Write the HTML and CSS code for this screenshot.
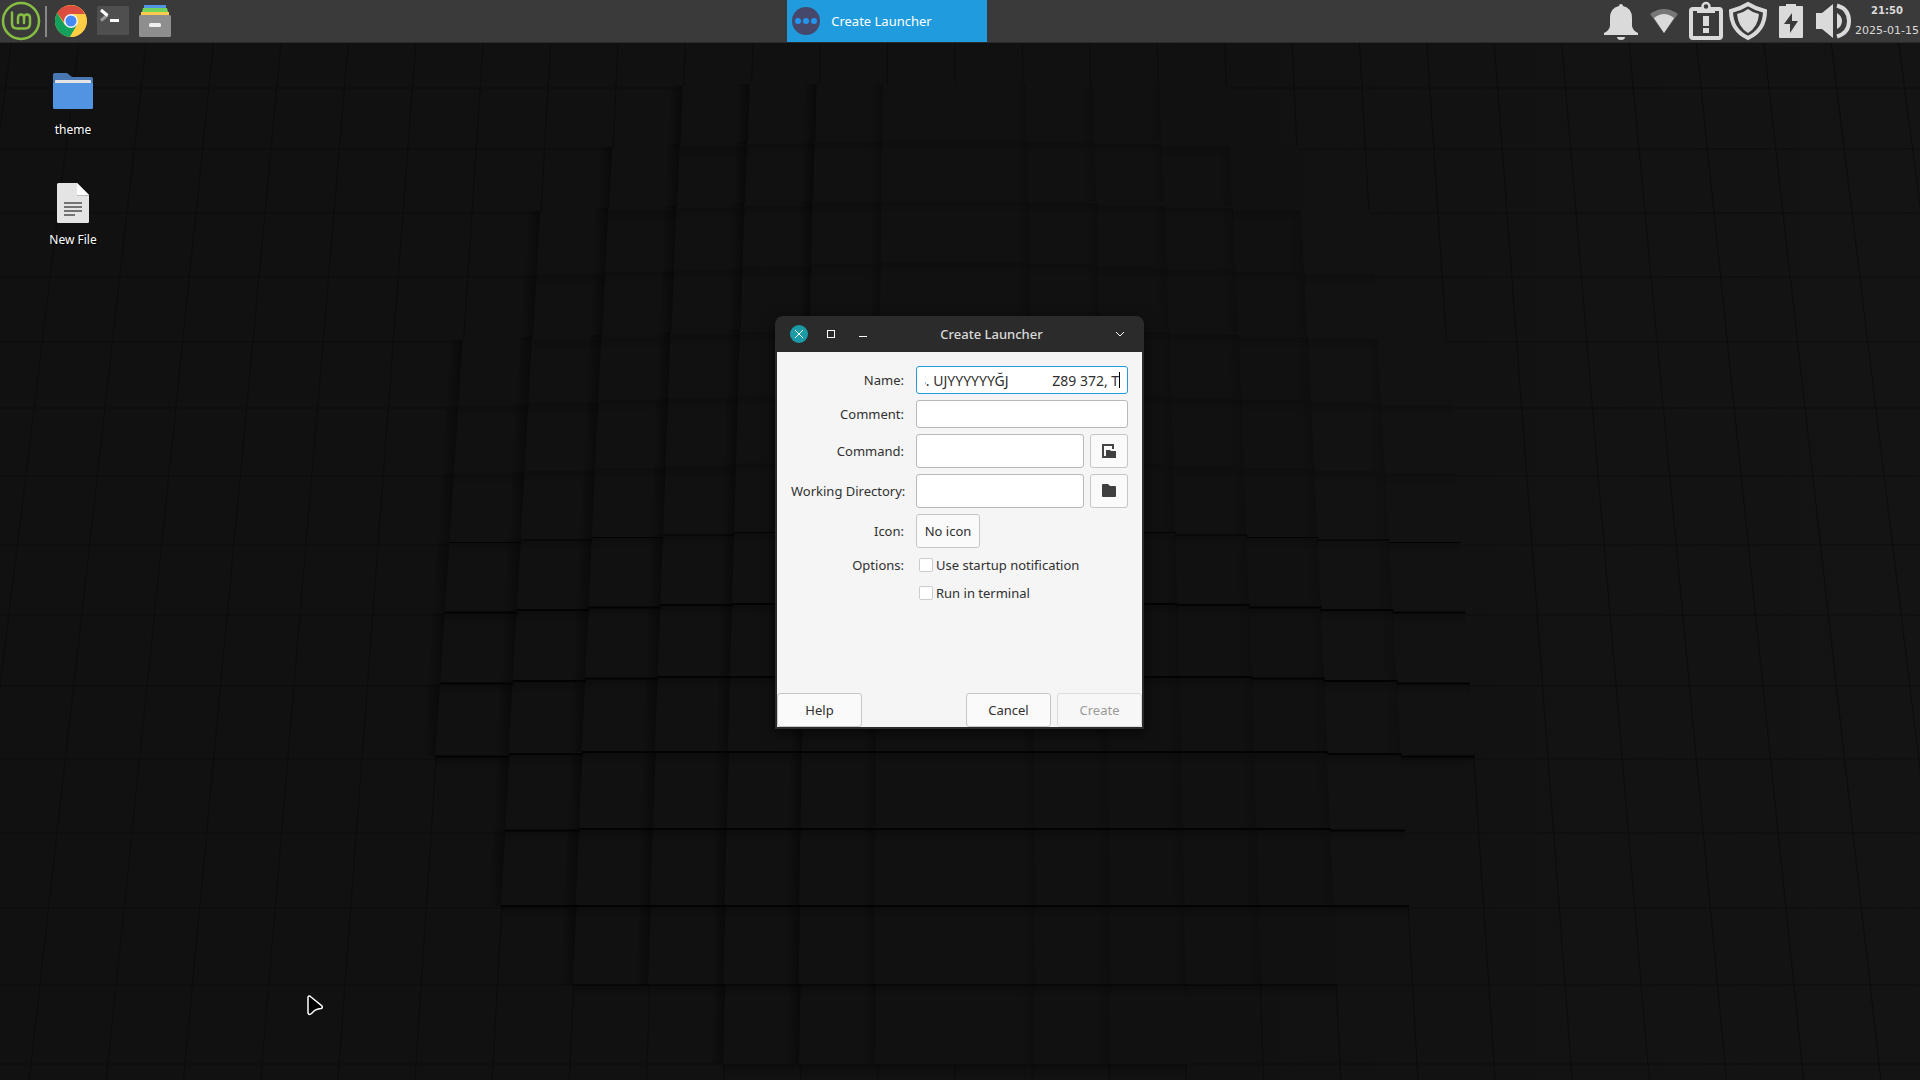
FILE: index.html
```html
<!DOCTYPE html>
<html lang="en">
<head>
<meta charset="utf-8">
<title>Desktop</title>
<link rel="stylesheet" href="styles.css">
</head>
<body>
<svg class="wallpaper" id="wallpaper" viewBox="0 0 1920 1080" preserveAspectRatio="xMidYMid slice" aria-hidden="true">
  <defs>
    <linearGradient id="base" x1="0" x2="1" y1="0" y2="0">
      <stop offset="0" stop-color="#111"/><stop offset="0.6" stop-color="#111"/><stop offset="1" stop-color="#141414"/>
    </linearGradient>
    <linearGradient id="side" x1="0" x2="1" y1="0" y2="0">
      <stop offset="0" stop-color="#050505" stop-opacity="0"/><stop offset="1" stop-color="#050505" stop-opacity="1"/>
    </linearGradient>
    <linearGradient id="under" x1="0" x2="0" y1="0" y2="1">
      <stop offset="0" stop-color="#050505" stop-opacity="1"/><stop offset="1" stop-color="#050505" stop-opacity="0"/>
    </linearGradient>
  </defs>
  <rect width="1920" height="1080" fill="url(#base)"/>
  <g id="grid"></g>
  <g id="blocks"></g>
  <g id="edges"></g>
</svg>

<header class="panel">
  <nav class="panel-left" aria-label="Launchers">
    <button class="menu-button" type="button" aria-label="Menu">
      <svg width="42" height="42" viewBox="0 0 42 42" fill="none" stroke="#86be43" stroke-linecap="round" stroke-linejoin="round">
        <circle cx="21" cy="21" r="18" stroke-width="2.500"/>
        <path d="M12 12.500V23.500Q12 28.500 17 28.500H25Q30 28.500 30 23.500V18Q30 14.500 27 14.500Q24 14.500 24 18V23M24 18Q24 14.500 21 14.500Q18 14.500 18 18V23" stroke-width="2.500"/>
      </svg>
    </button>
    <span class="separator"></span>
    <div class="launchers">
      <button type="button" aria-label="Chrome">
        <svg width="32" height="32" viewBox="0 0 32 32">
          <circle cx="16" cy="16" r="16" fill="#ffce44"/>
          <path d="M2.100 8A16 16 0 0 1 30 9H16L9 17Z" fill="#dc4d3f"/>
          <path d="M2.100 8A16 16 0 0 0 15 32L22 20L10 20Z" fill="#12a05c"/>
          <path d="M30 9A16 16 0 0 1 15 32L22.500 19L16 9Z" fill="#ffce44"/>
          <circle cx="16" cy="16" r="7" fill="#f3f3f3"/><circle cx="16" cy="16" r="5.500" fill="#4688f4"/>
        </svg>
      </button>
      <button type="button" aria-label="Terminal">
        <svg width="32" height="32" viewBox="0 0 32 32">
          <rect y="1" width="32" height="29" rx="1.500" fill="#4f4f4f"/>
          <path d="M4 15.500L10.500 10" stroke="#999" stroke-width="3"/>
          <path d="M4 5L10.500 10.500" stroke="#fff" stroke-width="3"/><path d="M13 15.500H22" stroke="#fff" stroke-width="3"/>
        </svg>
      </button>
      <button type="button" aria-label="Files">
        <svg width="32" height="32" viewBox="0 0 32 32">
          <path d="M5 0H27V4H5Z" fill="#5294e2"/><path d="M4 3H28L29 7H3Z" fill="#72d35a"/><path d="M2 7H30V11H2Z" fill="#ffcb4e"/>
          <rect y="10" width="32" height="22" rx="1.500" fill="#8e8e8e"/><rect x="10" y="18" width="12" height="4" rx="1.500" fill="#eee"/>
        </svg>
      </button>
    </div>
  </nav>
  <button class="task" type="button">
    <svg width="28" height="28" viewBox="0 0 28 28">
      <circle cx="14" cy="14" r="14" fill="#45486a"/>
      <g fill="#2196f3"><circle cx="6" cy="14" r="3"/><circle cx="14" cy="14" r="3"/><circle cx="22" cy="14" r="3"/></g>
    </svg>
    <span>Create Launcher</span>
  </button>
  <div class="tray">
    <svg width="40" height="42" viewBox="0 0 40 42" fill="#dadada"><path d="M16 6Q16 4 18 4Q20 4 20 6Q29 8 29 18V26Q30 31 35 33V35H1V33Q6 31 7 26V18Q7 8 16 6ZM14 37H22Q22 40 18 40Q14 40 14 37Z"/></svg>
    <svg width="40" height="42" viewBox="0 0 40 42"><path d="M19 33L5 14Q19 4 33 14Z" fill="#777"/><path d="M19 33L9 18Q19 10 29 18Z" fill="#dadada"/></svg>
    <svg width="40" height="42" viewBox="0 0 40 42"><rect x="4" y="9" width="30" height="29" rx="2" fill="none" stroke="#dadada" stroke-width="4"/><path d="M10 7H28V13H10ZM16 16H22V26H16ZM16 28H22V33H16Z" fill="#dadada"/><circle cx="19" cy="6.500" r="3.500" fill="#3a3a3a" stroke="#dadada" stroke-width="2.500"/></svg>
    <svg width="40" height="42" viewBox="0 0 40 42"><path d="M19 4Q27 9 36 11Q36 30 19 38Q2 30 2 11Q11 9 19 4Z" fill="none" stroke="#dadada" stroke-width="4"/><path d="M19 9Q24 13 30 14Q29 27 19 33Q9 27 8 14Q14 13 19 9Z" fill="#dadada"/></svg>
    <svg width="40" height="42" viewBox="0 0 40 42"><path d="M9 6H15V4H25V6H31Q32 6 32 7V37Q32 38 31 38H9Q8 38 8 37V7Q8 6 9 6Z" fill="#dadada"/><path d="M21 13L13 24H19V33L27 21H21Z" fill="#3a3a3a"/></svg>
    <svg width="40" height="42" viewBox="0 0 40 42"><path d="M3 13H9L20 4V38L9 29H3ZM24 13Q29 16 29 21Q29 26 24 29Z" fill="#dadada"/><path d="M24 5.500Q36 9 36 21Q36 33 24 36.500" fill="none" stroke="#dadada" stroke-width="4"/></svg>
    <div class="clock"><time class="clock-time">21:50</time><time class="clock-date">2025-01-15</time></div>
  </div>
</header>

<main class="desktop">
  <a class="desktop-icon" href="#theme">
    <svg width="40" height="40" viewBox="0 0 40 40">
      <path d="M0 10V1.500Q0 0 1.500 0H14L19 4H38.500Q40 4 40 5.500V10Z" fill="#4877b1"/><path d="M2 12V8Q2 7 3 7H37Q38 7 38 8V12Z" fill="#e4e4e4"/><path d="M0 10H40V34.500Q40 36 38.500 36H1.500Q0 36 0 34.500Z" fill="#5294e2"/>
    </svg>
    <span>theme</span>
  </a>
  <a class="desktop-icon" href="#new-file">
    <svg width="40" height="40" viewBox="0 0 40 40">
      <path d="M5.500 0H24L36 12V38.500Q36 40 34.500 40H5.500Q4 40 4 38.500V1.500Q4 0 5.500 0Z" fill="#e4e4e4"/><path d="M24 12.500H36" stroke="#bbb"/><path d="M24 0L36 12H25.500Q24 12 24 10.500Z" fill="#fff"/>
      <path d="M11 19H29V21H11ZM11 23H29V25H11ZM11 27H29V29H11ZM11 31H22V33H11Z" fill="#737373"/>
    </svg>
    <span>New File</span>
  </a>
</main>

<section class="window" role="dialog" aria-labelledby="window-title">
  <div class="titlebar">
    <div class="window-controls">
      <button type="button" aria-label="Close"><svg width="18" height="18" viewBox="0 0 18 18"><circle cx="9" cy="9" r="9" fill="#1b9ba8"/><path d="M5 5L13 13M13 5L5 13" stroke="#fff"/></svg></button>
      <button type="button" aria-label="Maximize"><svg width="18" height="18" viewBox="0 0 18 18"><rect x="5.500" y="5.500" width="7" height="7" fill="none" stroke="#fff"/></svg></button>
      <button type="button" aria-label="Minimize"><svg width="18" height="18" viewBox="0 0 18 18"><path d="M5 11.500H13" stroke="#fff"/></svg></button>
    </div>
    <h1 id="window-title">Create Launcher</h1>
    <button type="button" aria-label="Window menu"><svg width="18" height="18" viewBox="0 0 18 18"><path d="M5 7L9 11L13 7" fill="none" stroke="#fff"/></svg></button>
  </div>
  <form class="body">
    <div class="fields">
      <label for="name">Name:</label>
      <div class="name-field"><input id="name" type="text" value="ĞÜİŞ. UJYYYYYYĞJ            Z89 372, T"><span class="caret"></span></div>
      <label for="comment">Comment:</label>
      <input id="comment" type="text">
      <label for="command">Command:</label>
      <div class="with-button">
        <input id="command" type="text">
        <button type="button" aria-label="Browse applications"><svg width="16" height="16" viewBox="0 0 16 16"><path d="M5 14H2V2H12V6" fill="none" stroke="#444" stroke-width="2"/><path d="M5 7H9L10 8H15V15H5Z" fill="#3f3f3f"/></svg></button>
      </div>
      <label for="directory">Working Directory:</label>
      <div class="with-button">
        <input id="directory" type="text">
        <button type="button" aria-label="Browse folders"><svg width="16" height="16" viewBox="0 0 16 16"><path d="M1 2Q1 1 2 1H7L9 3H14Q15 3 15 4V13Q15 14 14 14H2Q1 14 1 13Z" fill="#3f3f3f"/></svg></button>
      </div>
      <label for="icon">Icon:</label>
      <button class="icon-button" id="icon" type="button">No icon</button>
      <span class="label">Options:</span>
      <label class="option"><input type="checkbox">Use startup notification</label>
      <label class="option second"><input type="checkbox">Run in terminal</label>
    </div>
    <div class="actions">
      <button class="help" type="button">Help</button>
      <button type="button">Cancel</button>
      <button type="submit" disabled>Create</button>
    </div>
  </form>
</section>

<svg class="pointer" width="20" height="24" viewBox="0 0 20 24" aria-hidden="true"><path d="M2 3Q3 1 5 3L16 12Q17 14 15 14.500Q9 15 6 19Q3 22 2 19Z" fill="#000" stroke="#fff" stroke-width="1.500"/></svg>
<script src="desktop.js"></script>
</body>
</html>
```
FILE: desktop.js
```js
const NS = "http://www.w3.org/2000/svg";
const grid = document.getElementById("grid");
const blocks = document.getElementById("blocks");
const edges = document.getElementById("edges");

// Row boundaries of the tiled floor and how many columns are raised per row.
const rows = [28, 88, 149, 213, 277, 342, 408, 476, 545, 615, 686, 759, 833, 908, 985, 1064, 1144];
const reach = [0, 4, 5, 6, 6, 7, 7, 7, 7, 7, 7, 6, 6, 5, 3, 0];
const lift = [0, 4, 8, 12, 15, 15, 15, 15, 13, 11, 9, 7, 4, 2, 0, 0, 0];

const colX = (k, y) => 955 + k * (67 + 0.0094 * y);

function add(parent, name, attrs) {
  const el = document.createElementNS(NS, name);
  for (const key in attrs) el.setAttribute(key, attrs[key]);
  parent.appendChild(el);
}

for (let k = -15; k <= 15; k++) {
  add(grid, "line", { x1: colX(k, 0), y1: 0, x2: colX(k, 1080), y2: 1080, stroke: "#0c0c0c" });
}
for (const y of rows) {
  add(grid, "line", { x1: 0, y1: y, x2: 1920, y2: y, stroke: "#0d0d0d" });
}

for (let i = 0; i < reach.length; i++) {
  for (let k = -reach[i]; k < reach[i]; k++) {
    const depth = reach[i] - (k < 0 ? -k : k + 1) + 1;
    const top = Math.min(lift[i], depth * 2.5);
    const bottom = Math.min(lift[i + 1], depth * 2.5);
    const shift = (edge) => Math.sign(edge) * Math.min(5, depth);
    const y1 = rows[i] - top;
    const y2 = rows[i + 1] - bottom;
    const a = colX(k, y1) + shift(k), b = colX(k + 1, y1) + shift(k + 1);
    const c = colX(k + 1, y2) + shift(k + 1), d = colX(k, y2) + shift(k);
    add(blocks, "polygon", { points: `${a},${y1} ${b},${y1} ${c},${y2} ${d},${y2}`, fill: k < 5 ? "#111111" : "#121212" });
    const side = k < -1 ? 0.6 : k < 1 ? 0.35 : 0.25;
    if (k !== 0) {
      add(blocks, "polygon", { points: `${a - 12},${y1} ${a},${y1} ${d},${y2} ${d - 12},${y2}`, fill: "url(#side)", opacity: side });
    }
    add(edges, "rect", { x: d, y: y2, width: c - d, height: 12, fill: "url(#under)", opacity: i > 7 ? 0.35 : 0.25 });
    if (i > 6 && i < 14) {
      add(edges, "line", { x1: d, y1: y2, x2: c, y2: y2, stroke: "#030303", "stroke-width": i > 7 && i < 13 ? 2 : 1 });
    }
  }
}

const nameInput = document.getElementById("name");
nameInput.scrollLeft = nameInput.scrollWidth;
```
FILE: styles.css
```css
* { box-sizing: border-box; }

body {
  margin: 0;
  min-height: 100vh;
  overflow: hidden;
  background: #111;
  color: #303030;
  font: 13px/18px "Noto Sans", sans-serif;
}

button {
  padding: 0;
  border: 0;
  background: none;
  color: inherit;
  font: inherit;
}

svg { display: block; flex: none; }

.wallpaper {
  position: absolute;
  inset: 0;
  width: 100%;
  height: 100%;
  z-index: -1;
}

.panel {
  display: grid;
  grid-template-columns: 41% 200px 1fr;
  height: 43px;
  background: #3a3a3a;
  border-bottom: 1px solid #2a2a2a;
}

.panel-left, .launchers, .tray, .task { display: flex; align-items: center; }
.separator { width: 2px; height: 31px; margin: 0 8px 0 3px; background: #888; }
.launchers { gap: 10px; }

.task {
  gap: 11px;
  padding: 0 5px;
  background: #209cde;
  color: #fff;
}

.tray { justify-content: flex-end; gap: 2px; }
.clock {
  display: flex;
  flex-direction: column;
  align-items: center;
  padding-right: 1px;
  color: #dadada;
  font: 11px/20px "DejaVu Sans", sans-serif;
}
.clock-time { font-size: 10px; font-weight: bold; }

.desktop {
  display: flex;
  flex-direction: column;
  align-items: flex-start;
  gap: 40px;
  padding: 30px 0 0 23px;
}
.desktop-icon {
  display: flex;
  flex-direction: column;
  align-items: center;
  gap: 8px;
  width: 100px;
  height: 70px;
  color: #fff;
  font-size: 12px;
  text-decoration: none;
  text-shadow: 1px 1px 1px #000;
}

.window {
  position: absolute;
  left: 775px;
  top: 316px;
  width: 369px;
  padding: 0 2px 2px;
  border-radius: 8px 8px 0 0;
  background: #2b2b2b;
  box-shadow: 0 4px 14px rgba(0, 0, 0, 0.6);
}
.titlebar {
  display: grid;
  grid-template-columns: auto 1fr auto;
  align-items: center;
  height: 36px;
  padding: 0 13px;
  color: #dadada;
}
.window-controls { display: flex; gap: 14px; }
.titlebar h1 { margin: 0; font-size: 13px; font-weight: 500; text-align: center; white-space: nowrap; }

.body {
  display: flex;
  flex-direction: column;
  justify-content: space-between;
  min-height: 375px;
  background: #f5f5f5;
}
.fields {
  display: grid;
  grid-template-columns: 113px 212px;
  column-gap: 12px;
  row-gap: 6px;
  align-items: center;
  padding: 14px;
}
.fields > label, .label { text-align: right; white-space: nowrap; }

.fields input[type="text"] {
  width: 100%;
  height: 28px;
  padding: 0 8px;
  border: 1px solid #b9b9b9;
  border-radius: 3px;
  outline: 0;
  background: #fff;
  color: #303030;
  font: inherit;
  font-size: 14px;
}
.name-field { position: relative; }
.fields .name-field input { border-color: #209cde; caret-color: transparent; }
.caret {
  position: absolute;
  right: 8px;
  top: 6px;
  width: 1px;
  height: 16px;
  background: #000;
}
.with-button { display: grid; grid-template-columns: 1fr 38px; gap: 6px; }
.fields .with-button input { height: 34px; }
.with-button button { display: grid; place-items: center; }
.with-button button, .icon-button, .actions button {
  height: 34px;
  border: 1px solid #c6c6c6;
  border-radius: 3px;
  background: #fafafa;
}
.icon-button { width: 64px; }
.fields > .option {
  display: flex;
  align-items: center;
  gap: 3px;
  height: 22px;
  padding-left: 3px;
}
.fields > .second { grid-column: 2; }
.option input {
  appearance: none;
  width: 14px;
  height: 14px;
  margin: 0;
  border: 1px solid #ccc;
  border-radius: 2px;
  background: #fff;
}

.actions { display: flex; gap: 6px; }
.actions button { width: 85px; }
.actions .help { margin-right: auto; }
.actions button:disabled { border-color: #dcdcdc; background: #f7f7f7; color: #9a9a9a; }

.pointer { position: absolute; left: 306px; top: 994px; }
```
